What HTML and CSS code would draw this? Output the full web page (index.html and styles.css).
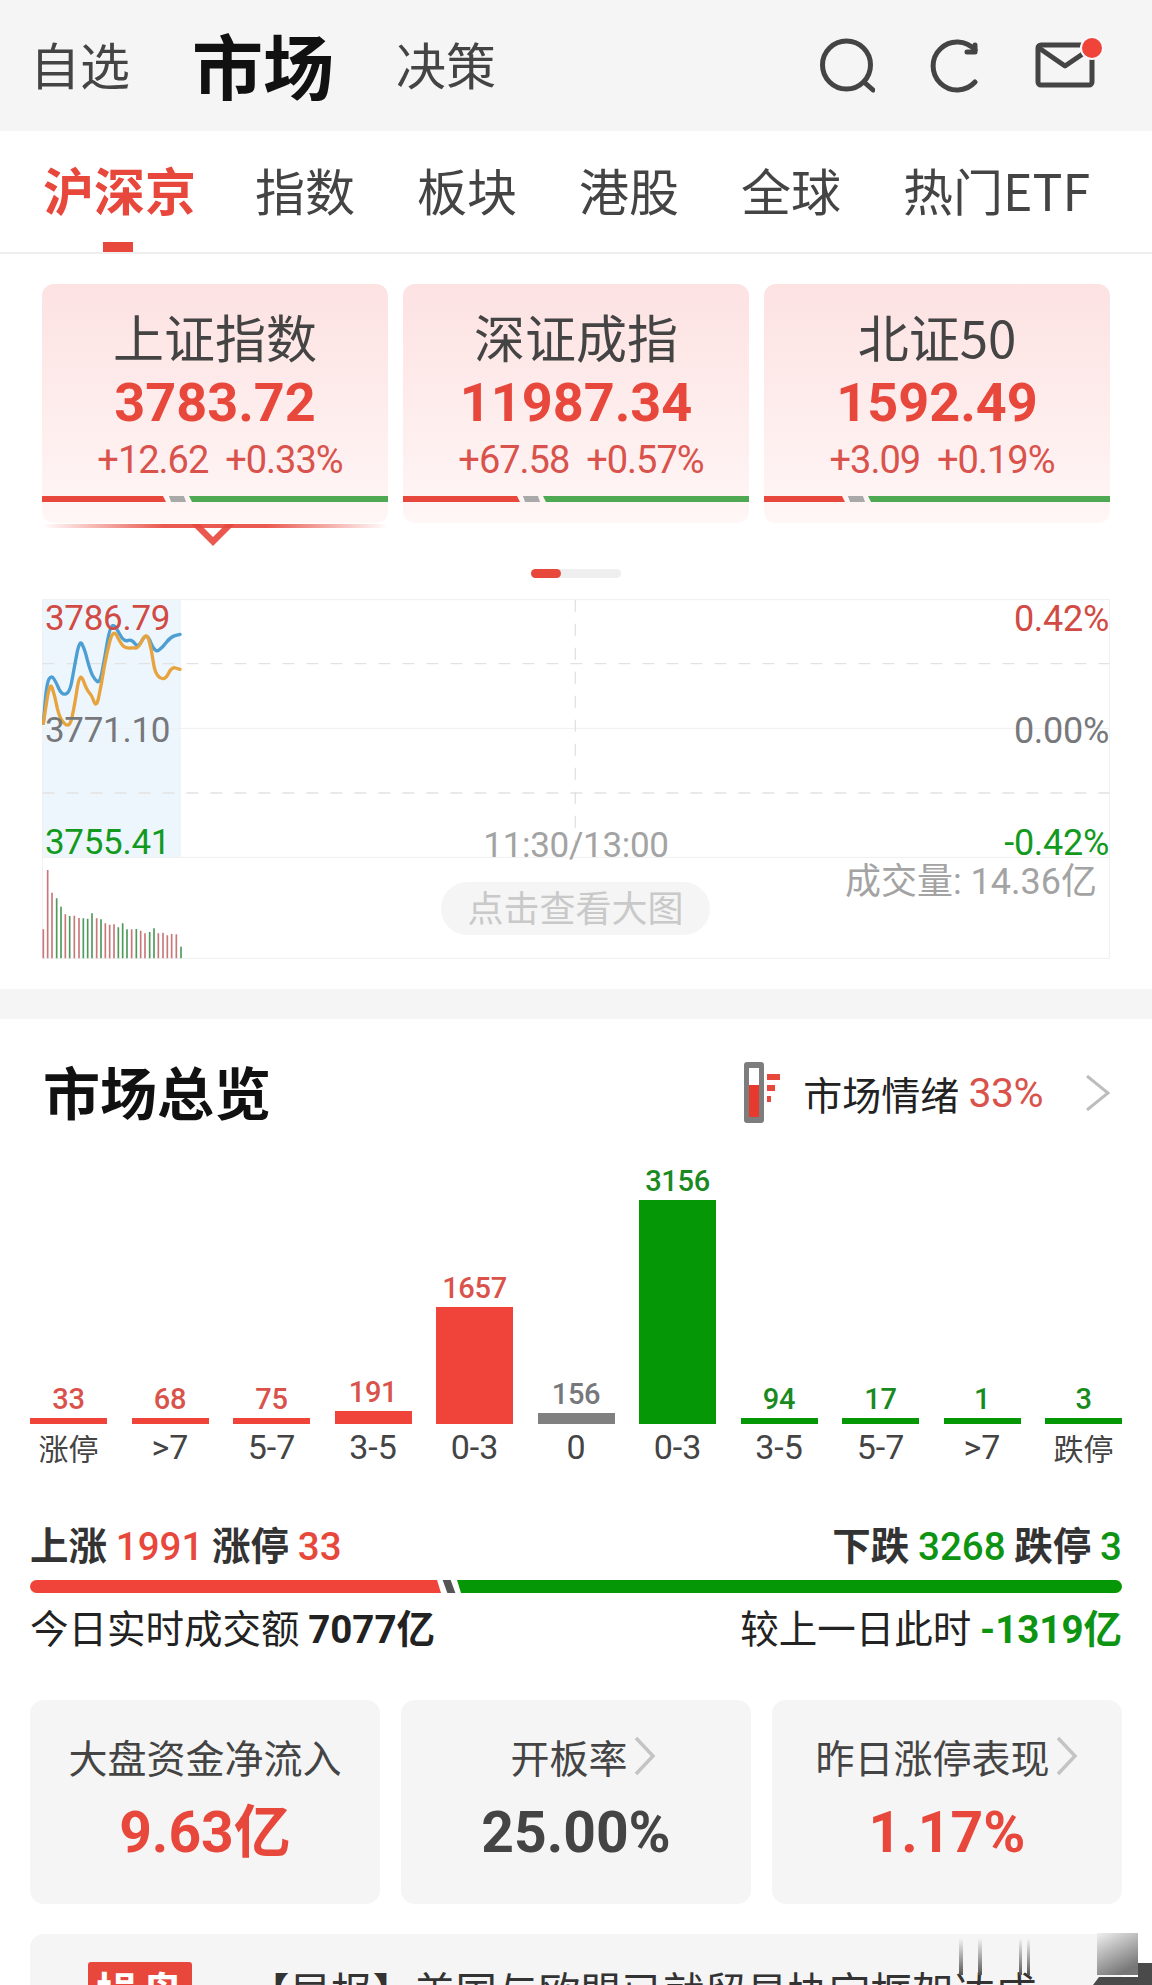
FILE: index.html
```html
<!DOCTYPE html>
<html lang="zh-CN">
<head>
  <meta charset="UTF-8">
  <meta name="viewport" content="width=device-width, initial-scale=1.0">
  <title>市场</title>
  <link rel="stylesheet" href="styles.css">
</head>
<body>

  <header class="topbar">
    <span class="top-link">自选</span>
    <span class="top-link top-active">市场</span>
    <span class="top-link">决策</span>
    <div class="top-icons">
      <svg class="icon-search" viewBox="0 0 56 56" aria-hidden="true">
        <circle cx="27.5" cy="28" r="24" />
        <path d="M45 45l9 8" />
      </svg>
      <svg class="icon-refresh" viewBox="0 0 50 56" aria-hidden="true">
        <path d="M47 13A24 24 0 1 0 47 45" />
        <path d="M39 15h8V8" />
      </svg>
      <div class="mail">
        <svg class="icon-mail" viewBox="0 0 60 46" aria-hidden="true">
          <rect x="3" y="3" width="54" height="40" rx="3" />
          <path d="M4 6l26 18 22-15" />
        </svg>
        <span class="mail-dot"></span>
      </div>
    </div>
  </header>

  <nav class="tabs">
    <span class="tab tab-active">沪深京</span>
    <span class="tab">指数</span>
    <span class="tab">板块</span>
    <span class="tab">港股</span>
    <span class="tab">全球</span>
    <span class="tab">热门ETF</span>
  </nav>

  <section class="index-cards">
    <div class="card card-selected">
      <div class="card-name">上证指数</div>
      <div class="card-price">3783.72</div>
      <div class="card-change">+12.62&nbsp;&nbsp;+0.33%</div>
      <div class="split">
        <span class="split-up" style="width: 124px"></span>
        <span class="split-flat"></span>
        <span class="split-down"></span>
      </div>
      <svg class="pointer" viewBox="0 0 346 26" aria-hidden="true">
        <defs>
          <linearGradient id="pointer-line">
            <stop offset="0" stop-color="#e8473c" stop-opacity="0" />
            <stop offset="0.35" stop-color="#e8473c" stop-opacity="0.9" />
            <stop offset="0.65" stop-color="#e8473c" stop-opacity="0.9" />
            <stop offset="1" stop-color="#e8473c" stop-opacity="0" />
          </linearGradient>
        </defs>
        <rect x="0" y="2" width="346" height="4" fill="url(#pointer-line)" />
        <path d="M149 2l22 22 22-22h-9l-13 13-13-13z" fill="#e8473c" fill-opacity="0.9" />
      </svg>
    </div>
    <div class="card">
      <div class="card-name">深证成指</div>
      <div class="card-price">11987.34</div>
      <div class="card-change">+67.58&nbsp;&nbsp;+0.57%</div>
      <div class="split">
        <span class="split-up" style="width: 117px"></span>
        <span class="split-flat"></span>
        <span class="split-down"></span>
      </div>
    </div>
    <div class="card">
      <div class="card-name">北证50</div>
      <div class="card-price">1592.49</div>
      <div class="card-change">+3.09&nbsp;&nbsp;+0.19%</div>
      <div class="split">
        <span class="split-up" style="width: 81px"></span>
        <span class="split-flat"></span>
        <span class="split-down"></span>
      </div>
    </div>
  </section>

  <div class="pager"><span class="pager-on"></span></div>

  <section class="chart">
    <svg class="chart-svg" viewBox="126 57 3204 1080" aria-hidden="true">
      <rect x="127" y="59" width="416" height="774" fill="#edf6fd" />
      <g fill="none" stroke="#efefef" stroke-width="3">
        <rect x="127" y="59" width="3201" height="1076" />
        <path d="M127 445H3328M127 832H3328" />
      </g>
      <g fill="none" stroke="#e2e2e2" stroke-width="4" stroke-dasharray="36 36">
        <path d="M127 251H3328M127 639H3328" />
        <path d="M1726 59V832" />
      </g>
      <path fill="none" stroke="#4d9fd3" stroke-width="10" stroke-linecap="round" d="M130 430L135 370Q140 310 147 297Q155 285 162 297Q170 310 177 327Q185 345 197 342Q210 340 217 295Q225 250 232 214Q240 178 247 194Q255 210 262 240Q270 270 277 285Q285 300 292 305Q300 310 307 270Q315 230 322 185Q330 140 337 137Q345 135 352 150Q360 165 367 175Q375 185 385 181Q395 178 405 191Q415 205 427 180Q440 155 452 187Q465 220 477 210Q490 200 500 186Q510 172 525 167L540 163" />
      <path fill="none" stroke="#e6a33e" stroke-width="10" stroke-linecap="round" d="M130 430L140 365Q150 300 157 325Q165 350 172 385Q180 420 195 432Q210 445 217 407Q225 370 232 322Q240 275 250 302Q260 330 267 337Q275 345 282 365Q290 385 297 347Q305 310 312 265Q320 220 330 182Q340 145 352 170Q365 195 372 200Q380 205 390 204Q400 203 407 204Q415 205 427 180Q440 155 447 182Q455 210 460 247Q465 285 480 293Q495 302 505 281Q515 260 527 264L540 268" />
      <path fill="none" stroke="#c9787a" stroke-width="5" d="M130 1135V1048M143 1135V870M156 1135V938M196 1135V1003M223 1135V1007M237 1135V1014M290 1135V1015M316 1135V1030M329 1135V1034M342 1135V1033M395 1135V1048M422 1135V1052M435 1135V1060M475 1135V1060M489 1135V1058M502 1135V1066M515 1135V1062M529 1135V1063" />
      <path fill="none" stroke="#4f9a5b" stroke-width="5" d="M170 1135V955M183 1135V980M209 1135V1008M250 1135V1015M263 1135V1016M276 1135V1000M303 1135V1018M355 1135V1042M368 1135V1030M381 1135V1048M409 1135V1047M449 1135V1056M462 1135V1045M543 1135V1100" />
    </svg>
    <span class="axis axis-left axis-top axis-up">3786.79</span>
    <span class="axis axis-left axis-mid flat">3771.10</span>
    <span class="axis axis-left axis-low axis-down">3755.41</span>
    <span class="axis axis-right axis-top axis-up">0.42%</span>
    <span class="axis axis-right axis-mid flat">0.00%</span>
    <span class="axis axis-right axis-low axis-down">-0.42%</span>
    <span class="axis axis-time">11:30/13:00</span>
    <span class="volume">成交量: 14.36亿</span>
    <span class="big-chart">点击查看大图</span>
  </section>

  <div class="gap"></div>

  <section class="overview">
    <div class="overview-head">
      <h2 class="overview-title">市场总览</h2>
      <div class="mood">
        <svg class="icon-thermo" viewBox="0 0 36 61" aria-hidden="true">
          <rect x="0" y="0" width="20" height="61" rx="3" fill="#7d7d7d" />
          <rect x="5" y="6" width="10" height="49" fill="#fff" />
          <rect x="5" y="23" width="10" height="32" fill="#e8392f" />
          <rect x="23" y="12" width="13" height="6" fill="#e8473c" />
          <rect x="23" y="23" width="8" height="6" fill="#e8473c" />
          <rect x="23" y="34" width="4" height="6" fill="#e8473c" />
        </svg>
        <span class="mood-label">市场情绪</span>
        <span class="mood-value">33%</span>
        <svg class="icon-more" viewBox="0 0 24 36" aria-hidden="true">
          <path d="M1 1l21 17L1 35" />
        </svg>
      </div>
    </div>

    <div class="bars">
      <div class="bar-col"><span class="bar-num num-up">33</span><span class="bar bar-up" style="height: 6px"></span><span class="bar-label">涨停</span></div>
      <div class="bar-col"><span class="bar-num num-up">68</span><span class="bar bar-up" style="height: 6px"></span><span class="bar-label bar-range">&gt;7</span></div>
      <div class="bar-col"><span class="bar-num num-up">75</span><span class="bar bar-up" style="height: 6px"></span><span class="bar-label bar-range">5-7</span></div>
      <div class="bar-col"><span class="bar-num num-up">191</span><span class="bar bar-up" style="height: 13px"></span><span class="bar-label bar-range">3-5</span></div>
      <div class="bar-col"><span class="bar-num num-up">1657</span><span class="bar bar-up" style="height: 117px"></span><span class="bar-label bar-range">0-3</span></div>
      <div class="bar-col"><span class="bar-num flat">156</span><span class="bar bar-flat" style="height: 11px"></span><span class="bar-label bar-range">0</span></div>
      <div class="bar-col"><span class="bar-num num-down">3156</span><span class="bar bar-down" style="height: 224px"></span><span class="bar-label bar-range">0-3</span></div>
      <div class="bar-col"><span class="bar-num num-down">94</span><span class="bar bar-down" style="height: 6px"></span><span class="bar-label bar-range">3-5</span></div>
      <div class="bar-col"><span class="bar-num num-down">17</span><span class="bar bar-down" style="height: 6px"></span><span class="bar-label bar-range">5-7</span></div>
      <div class="bar-col"><span class="bar-num num-down">1</span><span class="bar bar-down" style="height: 6px"></span><span class="bar-label bar-range">&gt;7</span></div>
      <div class="bar-col"><span class="bar-num num-down">3</span><span class="bar bar-down" style="height: 6px"></span><span class="bar-label">跌停</span></div>
    </div>

    <div class="count-row">
      <span>上涨 <b class="up">1991</b> 涨停 <b class="up">33</b></span>
      <span>下跌 <b class="down">3268</b> 跌停 <b class="down">3</b></span>
    </div>
    <div class="ratio">
      <span class="ratio-up"></span>
      <span class="ratio-flat"></span>
      <span class="ratio-down"></span>
    </div>
    <div class="turnover-row">
      <span>今日实时成交额 <b>7077亿</b></span>
      <span>较上一日此时 <b class="down">-1319亿</b></span>
    </div>

    <div class="tiles">
      <div class="tile">
        <div class="tile-name">大盘资金净流入</div>
        <div class="tile-value up">9.63亿</div>
      </div>
      <div class="tile">
        <div class="tile-name">开板率<svg class="icon-tile-more" viewBox="0 0 24 40" aria-hidden="true"><path d="M3 2l17 18L3 38" /></svg></div>
        <div class="tile-value">25.00%</div>
      </div>
      <div class="tile">
        <div class="tile-name">昨日涨停表现<svg class="icon-tile-more" viewBox="0 0 24 40" aria-hidden="true"><path d="M3 2l17 18L3 38" /></svg></div>
        <div class="tile-value up">1.17%</div>
      </div>
    </div>

    <div class="news">
      <span class="news-badge">操盘</span>
      <span class="news-text">【早报】美国与欧盟已就贸易协定框架达成</span>
    </div>
  </section>

  <!-- smudge over the bottom right corner of the picture -->
  <svg class="smudge" viewBox="0 0 202 55" aria-hidden="true">
    <defs>
      <linearGradient id="smudge-line" x2="0" y2="1">
        <stop offset="0" stop-color="#666" stop-opacity="0" />
        <stop offset="1" stop-color="#555" />
      </linearGradient>
      <linearGradient id="smudge-patch" x2="0.5" y2="1">
        <stop offset="0" stop-color="#f0f0f0" />
        <stop offset="1" stop-color="#777" />
      </linearGradient>
    </defs>
    <g fill="url(#smudge-line)">
      <rect x="9" y="8" width="4" height="37" />
      <rect x="28" y="8" width="4" height="37" />
      <rect x="69" y="8" width="3" height="37" />
      <rect x="77" y="8" width="3" height="37" />
    </g>
    <rect x="147" y="3" width="41" height="42" fill="url(#smudge-patch)" />
    <path d="M188 33h14v22h-59l6-8h39z" fill="#4a4a4a" />
  </svg>

</body>
</html>
```

FILE: styles.css
```css
* {
  box-sizing: border-box;
}

html, body {
  margin: 0;
  padding: 0;
  height: 1985px;
  overflow: hidden;
}

body {
  position: relative;
  font-family: "Noto Sans CJK SC", Roboto, sans-serif;
  background-color: #fff;
  color: #444;
}

.up { color: #e8473c; }
.down { color: #0d9413; }
.flat { color: #77787c; }

/* top bar */
.topbar {
  display: flex;
  align-items: center;
  height: 131px;
  padding: 0 0 4px 30px;
  background-color: #f5f5f5;
}

.top-link {
  font-size: 50px;
  line-height: 127px;
  margin-right: 62px;
  color: #444;
}

.top-active {
  font-size: 71px;
  font-weight: 700;
  color: #111;
}

.top-icons {
  display: flex;
  align-items: center;
  margin-left: auto;
  margin-right: 57px;
  margin-top: 3px;
}

.top-icons svg {
  display: block;
  fill: none;
  stroke: #444;
  stroke-width: 5;
  stroke-linecap: round;
  stroke-linejoin: round;
}

.icon-search {
  width: 56px;
  height: 56px;
  margin-right: 53px;
}

.icon-refresh {
  width: 50px;
  height: 56px;
  margin-right: 57px;
}

.mail {
  position: relative;
  width: 60px;
  height: 46px;
}

.icon-mail {
  width: 60px;
  height: 46px;
}

.mail-dot {
  position: absolute;
  top: -6px;
  right: -9px;
  width: 24px;
  height: 24px;
  border-radius: 50%;
  background-color: #f0433a;
  border: 2px solid #f8f8f8;
}

/* tabs */
.tabs {
  display: flex;
  align-items: center;
  height: 123px;
  padding: 0 0 4px 43px;
  gap: 62px;
  border-bottom: 2px solid #efefef;
}

.tab {
  font-size: 50px;
  line-height: 117px;
  color: #444;
}

.tab-active {
  position: relative;
  margin-right: -3px;
  font-size: 51px;
  font-weight: 700;
  color: #e8473c;
}

.tab-active::after {
  content: "";
  position: absolute;
  left: 60px;
  bottom: -4px;
  width: 30px;
  height: 10px;
  background-color: #e8473c;
}

/* index cards */
.index-cards {
  display: grid;
  grid-template-columns: repeat(3, 346px);
  gap: 15px;
  padding: 30px 42px 0;
}

.card {
  position: relative;
  height: 239px;
  border-radius: 12px;
  background: linear-gradient(#fde2e2, #fff6f6);
  text-align: center;
}

.card-name {
  padding-top: 24px;
  font-size: 51px;
  line-height: 56px;
  color: #444;
}

.card-price {
  margin-top: 11px;
  font-family: Roboto, sans-serif;
  font-size: 54px;
  font-weight: 700;
  line-height: 56px;
  color: #e8473c;
}

.card-change {
  margin-top: 7px;
  padding-left: 10px;
  font-family: Roboto, sans-serif;
  font-size: 38px;
  letter-spacing: -1px;
  line-height: 44px;
  color: #d9534c;
}

.split {
  display: flex;
  height: 6px;
  margin-top: 14px;
}

.split-up {
  background-color: #e8473c;
  clip-path: polygon(0 0, calc(100% - 3px) 0, 100% 100%, 0 100%);
}

.split-flat {
  width: 15px;
  margin: 0 4px;
  background-color: #a9a9a9;
  transform: skewX(20deg);
}

.split-down {
  flex: 1;
  background-color: #4fa952;
  clip-path: polygon(0 0, 100% 0, 100% 100%, 3px 100%);
}

.pointer {
  position: absolute;
  left: 0;
  top: 238px;
  width: 346px;
  height: 26px;
}

/* pager */
.pager {
  width: 90px;
  height: 9px;
  margin: 46px auto 0;
  border-radius: 5px;
  background-color: #efefef;
}

.pager-on {
  display: block;
  width: 30px;
  height: 9px;
  border-radius: 5px;
  background-color: #e8473c;
}

/* intraday chart */
.chart {
  position: relative;
  height: 360px;
  margin: 21px 42px 0;
  font-family: Roboto, sans-serif;
}

.chart-svg {
  display: block;
  width: 1068px;
  height: 360px;
}

.axis {
  position: absolute;
  font-size: 35px;
  letter-spacing: -0.3px;
  line-height: 40px;
}

.axis-up { color: #d14a43; }
.axis-down { color: #139a1e; }
.axis-left { left: 3px; }
.axis-right { right: 1px; font-size: 36px; }
.axis-top { top: 0; }
.axis-mid { top: 112px; }
.axis-low { top: 224px; }

.axis-time {
  left: 0;
  right: 0;
  top: 227px;
  text-align: center;
  color: #a3a3a3;
}

.volume {
  position: absolute;
  right: 13px;
  top: 261px;
  font-family: Roboto, "Noto Sans CJK SC", sans-serif;
  font-size: 36px;
  line-height: 44px;
  color: #a3a3a3;
}

.big-chart {
  position: absolute;
  left: 399px;
  top: 283px;
  width: 269px;
  height: 53px;
  border-radius: 27px;
  background-color: #f5f5f5;
  font-family: "Noto Sans CJK SC", sans-serif;
  font-size: 36px;
  line-height: 49px;
  text-align: center;
  color: #c9c9c9;
}

.gap {
  height: 30px;
  margin-top: 30px;
  background-color: #f5f5f5;
}

/* market overview */
.overview {
  padding: 0 30px;
}

.overview-head {
  display: flex;
  align-items: center;
  justify-content: space-between;
  height: 76px;
  margin-top: 33px;
  padding: 0 12px 0 13px;
}

.overview-title {
  margin: 0;
  font-size: 57px;
  font-weight: 700;
  line-height: 76px;
  color: #111;
}

.mood {
  display: flex;
  align-items: center;
  margin-top: 5px;
}

.icon-thermo {
  width: 36px;
  height: 61px;
  margin-right: 23px;
}

.mood-label {
  font-size: 39px;
  line-height: 60px;
  color: #222;
}

.mood-value {
  margin-left: 9px;
  font-family: Roboto, sans-serif;
  font-size: 41px;
  letter-spacing: -0.5px;
  color: #d9534c;
}

.icon-more {
  width: 24px;
  height: 36px;
  margin-left: 43px;
  fill: none;
  stroke: #bdbdbd;
  stroke-width: 3;
}

.bars {
  display: grid;
  grid-template-columns: repeat(11, 77px);
  justify-content: space-between;
  align-items: end;
  margin-top: 36px;
}

.bar-col {
  display: flex;
  flex-direction: column;
  align-items: center;
}

.bar-num {
  font-family: Roboto, sans-serif;
  font-size: 29px;
  font-weight: 500;
  letter-spacing: -0.3px;
  line-height: 34px;
  margin-bottom: 2px;
}

.num-up { color: #d9534c; }
.num-down { color: #1a8a1f; }

.bar {
  display: block;
  width: 100%;
}

.bar-up { background-color: #f0433a; }
.bar-flat { background-color: #808080; }
.bar-down { background-color: #069706; }

.bar-label {
  font-size: 30px;
  line-height: 46px;
  color: #444;
}

.bar-range {
  font-family: Roboto, sans-serif;
  font-size: 34px;
}

.count-row,
.turnover-row {
  display: flex;
  justify-content: space-between;
  font-size: 38.5px;
}

.count-row {
  margin-top: 48px;
  line-height: 50px;
  font-weight: 700;
  color: #333;
}

.count-row b {
  font-family: Roboto, sans-serif;
  font-weight: 500;
}

.ratio {
  display: flex;
  height: 13px;
  margin-top: 8px;
  border-radius: 7px;
  overflow: hidden;
}

.ratio-up {
  width: 411px;
  background-color: #f0433a;
  clip-path: polygon(0 0, calc(100% - 4px) 0, 100% 100%, 0 100%);
}

.ratio-flat {
  width: 8px;
  margin: 0 4px;
  background-color: #555;
  transform: skewX(20deg);
}

.ratio-down {
  flex: 1;
  background-color: #069706;
  clip-path: polygon(0 0, 100% 0, 100% 100%, 4px 100%);
}

.turnover-row {
  margin-top: 8px;
  line-height: 50px;
  color: #222;
}

.turnover-row b {
  font-family: Roboto, "Noto Sans CJK SC", sans-serif;
  font-weight: 700;
}

.tiles {
  display: grid;
  grid-template-columns: repeat(3, 350px);
  justify-content: space-between;
  margin-top: 45px;
}

.tile {
  height: 204px;
  border-radius: 14px;
  background-color: #f5f5f5;
  text-align: center;
}

.tile-name {
  display: flex;
  align-items: center;
  justify-content: center;
  padding-top: 31px;
  font-size: 39px;
  line-height: 50px;
  color: #444;
}

.tile:nth-child(2) .tile-name {
  padding-left: 15px;
}

.icon-tile-more {
  width: 24px;
  height: 40px;
  margin-left: 5px;
  fill: none;
  stroke: #c4c4c4;
  stroke-width: 3.5;
}

.tile-value {
  margin-top: 16px;
  font-family: Roboto, "Noto Sans CJK SC", sans-serif;
  font-size: 57px;
  font-weight: 700;
  line-height: 72px;
  color: #444;
}

.tile-value.up {
  color: #e8473c;
}

.news {
  display: flex;
  align-items: flex-start;
  height: 100px;
  margin-top: 30px;
  padding: 28px 0 0 58px;
  border-radius: 14px 14px 0 0;
  background-color: #f5f5f5;
  overflow: hidden;
}

.news-badge {
  width: 104px;
  height: 60px;
  border-radius: 3px;
  background-color: #e8473c;
  color: #fff;
  font-size: 44px;
  font-weight: 700;
  line-height: 58px;
  text-align: center;
}

.news-text {
  margin-left: 56px;
  margin-top: 3px;
  font-size: 41.5px;
  line-height: 50px;
  color: #333;
  white-space: nowrap;
}

.smudge {
  position: absolute;
  left: 950px;
  top: 1930px;
  width: 202px;
  height: 55px;
}
```
